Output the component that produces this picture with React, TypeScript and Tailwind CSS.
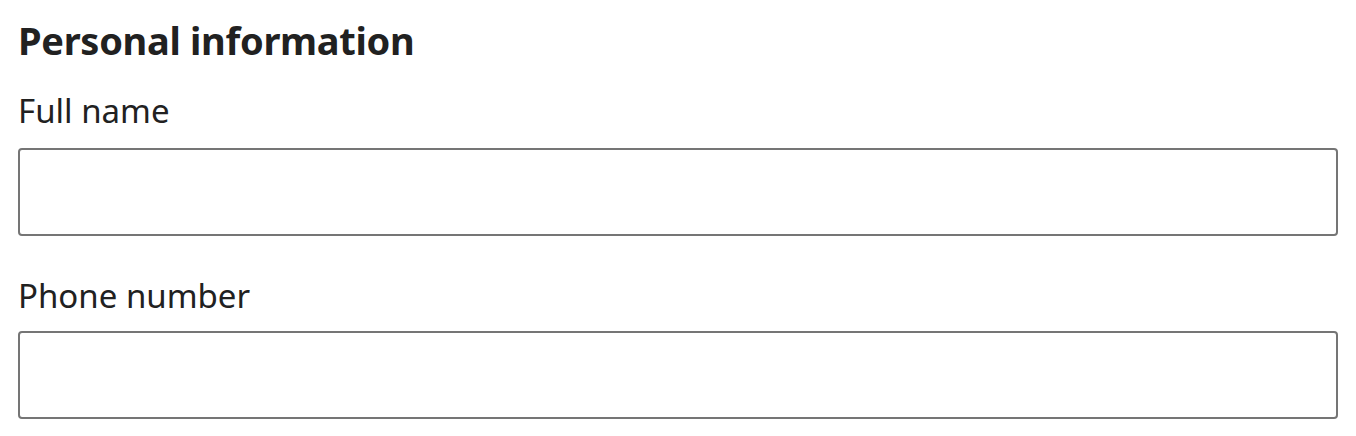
export default function App() {
  return (
    <div
      className="bg-white px-[18px] pt-[14px] text-[#212121]"
      style={{ fontFamily: '"Noto Sans", "Open Sans", sans-serif' }}
    >
      <h2 className="text-[38px] font-bold leading-[52px] tracking-[-0.3px]">Personal information</h2>

      <label className="mt-[23px] block text-[33px] leading-[44px]">Full name</label>
      <input
        type="text"
        className="mt-[15px] block h-[88px] w-[1320px] rounded-[4px] border-2 border-[#757575] bg-white px-4 text-[31px] outline-none"
      />

      <label className="mt-[38px] block text-[33px] leading-[44px]">Phone number</label>
      <input
        type="tel"
        className="mt-[13px] block h-[88px] w-[1320px] rounded-[4px] border-2 border-[#757575] bg-white px-4 text-[31px] outline-none"
      />
    </div>
  );
}
